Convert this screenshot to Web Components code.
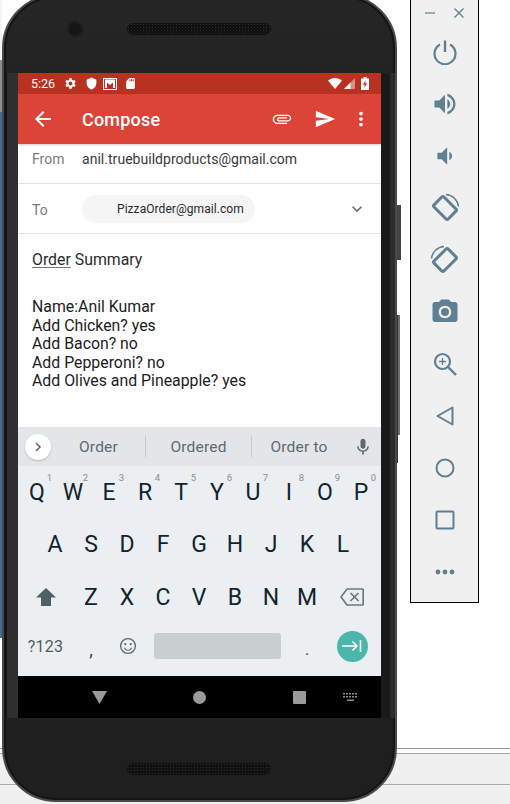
<!DOCTYPE html>
<html>
<head>
<meta charset="utf-8">
<title>Compose</title>
<style>
  html, body { margin: 0; height: 100%; }
  body { overflow: hidden; font-family: Roboto, "Liberation Sans", sans-serif; }
</style>
</head>
<body>
<emulator-stage>
  <phone-frame slot="phone">
    <status-bar></status-bar>
    <app-bar></app-bar>
    <compose-fields></compose-fields>
    <message-body></message-body>
    <suggestion-strip></suggestion-strip>
    <soft-keyboard></soft-keyboard>
    <nav-bar></nav-bar>
  </phone-frame>
  <emulator-panel slot="panel"></emulator-panel>
</emulator-stage>

<script>
function icon(d, size, fill, extra = "") {
  return `<svg width="${size}" height="${size}" viewBox="0 0 24 24" fill="${fill}" ${extra}><path d="${d}"/></svg>`;
}

class EmulatorStage extends HTMLElement {
  constructor() {
    super();
    this.attachShadow({ mode: "open" }).innerHTML = `
    <style>
      :host {
        display: flex;
        width: 510px;
        height: 804px;
        overflow: hidden;
        background:
          linear-gradient(#fff 0 748px, #999 748px 749px, #fff 749px 753px, #a5a5a5 753px 754px, #f0f0f0 754px 784px, #a8a8a8 784px 785px, #f0f0f0 785px);
      }
      .edge { width: 2px; flex: none; height: 638px; background: linear-gradient(#f5f5f5 0 60px, #8f8f8f 60px 112px, #3f6d99 112px); }
      .buttons { width: 4px; flex: none; display: flex; flex-direction: column; align-items: flex-start; padding-top: 205px; margin-right: 9px; }
      .buttons i { display: block; }
      .buttons .vol { width: 4px; height: 55px; margin-bottom: 55px; background: #444; }
      .buttons .pow { width: 3px; height: 120px; background: linear-gradient(90deg, #333 0 1px, #6e6e6e 1px); }
      .buttons .end { width: 1px; height: 28px; background: #333; }
    </style>
    <div class="edge"></div>
    <slot name="phone"></slot>
    <div class="buttons"><i class="vol"></i><i class="pow"></i><i class="end"></i></div>
    <slot name="panel"></slot>`;
  }
}

class PhoneFrame extends HTMLElement {
  constructor() {
    super();
    this.attachShadow({ mode: "open" }).innerHTML = `
    <style>
      :host {
        display: flex;
        flex-direction: column;
        flex: none;
        box-sizing: border-box;
        width: 395px;
        height: 808px;
        margin-top: -6px;
        border-radius: 54px;
        background: linear-gradient(#262626, #1f1f1f 20%);
        border: 2px solid #4a4a4a;
        box-shadow: inset 0 0 0 2px #141414;
      }
      .top, .bottom { display: flex; align-items: center; flex: none; }
      .top { height: 77px; padding-left: 65px; }
      .bottom { height: 82px; padding-left: 123px; }
      .mid {
        display: flex; flex: none; height: 645px;
        background: linear-gradient(90deg, #141414 0 3px, #2f2f2f 3px 14px, #1a1a1a 14px 386px, #2c2c2c 386px);
      }
      .screen { display: flex; flex-direction: column; width: 363px; height: 645px; margin-left: 14px; overflow: hidden; background: #fff; }
      .speaker {
        width: 144px; height: 12px; border-radius: 6px; background-color: #111;
        background-image: radial-gradient(#2c2c2c 0.7px, transparent 0.8px);
        background-size: 3px 3px;
      }
      .top .speaker { margin-bottom: 11px; }
      .bottom .speaker { margin-top: 20px; }
      .camera {
        width: 12px; height: 12px; border-radius: 50%; background: #161618; flex: none;
        box-shadow: 0 0 0 2px #1d1d1e; margin: 0 46px 11px 0;
      }
    </style>
    <div class="top"><div class="camera"></div><div class="speaker"></div></div>
    <div class="mid"><div class="screen"><slot></slot></div></div>
    <div class="bottom"><div class="speaker"></div></div>`;
  }
}

class StatusBar extends HTMLElement {
  constructor() {
    super();
    const gear = "M19.14 12.94c.04-.3.06-.61.06-.94 0-.32-.02-.64-.07-.94l2.03-1.58c.18-.14.23-.41.12-.61l-1.92-3.32c-.12-.22-.37-.29-.59-.22l-2.39.96c-.5-.38-1.03-.7-1.62-.94l-.36-2.54c-.04-.24-.24-.41-.48-.41h-3.84c-.24 0-.43.17-.47.41l-.36 2.54c-.59.24-1.13.57-1.62.94l-2.39-.96c-.22-.08-.47 0-.59.22L2.74 8.87c-.12.21-.08.47.12.61l2.03 1.58c-.05.3-.09.63-.09.94s.02.64.07.94l-2.03 1.58c-.18.14-.23.41-.12.61l1.92 3.32c.12.22.37.29.59.22l2.39-.96c.5.38 1.03.7 1.62.94l.36 2.54c.05.24.24.41.48.41h3.84c.24 0 .44-.17.47-.41l.36-2.54c.59-.24 1.13-.56 1.62-.94l2.39.96c.22.08.47 0 .59-.22l1.92-3.32c.12-.22.07-.47-.12-.61l-2.01-1.58zM12 15.6c-1.98 0-3.6-1.62-3.6-3.6s1.62-3.6 3.6-3.6 3.6 1.62 3.6 3.6-1.62 3.6-3.6 3.6z";
    const shield = "M12 1L3 5v6c0 5.55 3.84 10.74 9 12 5.16-1.26 9-6.45 9-12V5l-9-4z";
    const sd = "M18 2h-8L4.02 8 4 20c0 1.1.9 2 2 2h12c1.1 0 2-.9 2-2V4c0-1.1-.9-2-2-2zm-6 6h-2V4h2v4zm3 0h-2V4h2v4zm3 0h-2V4h2v4z";
    this.attachShadow({ mode: "open" }).innerHTML = `
    <style>
      :host {
        display: flex; align-items: center; flex: none; box-sizing: border-box;
        height: 21px; padding: 0 12px 0 13px; background: #b93221; color: #fff;
        font: 400 12.5px Roboto, sans-serif;
      }
      svg { display: block; flex: none; }
      .time { width: 33px; }
      .left { display: flex; align-items: center; }
      .right { display: flex; align-items: center; margin-left: auto; gap: 2px; }
    </style>
    <div class="time">5:26</div>
    <div class="left">
      ${icon(gear, 13, "#fff")}
      ${icon(shield, 13, "#fff", 'style="margin-left:8px"')}
      <svg width="14" height="12" viewBox="0 0 14 12" style="margin-left:5px"><path fill="#fff" d="M0 0h14v12H0z"/><path fill="#b93221" d="M1 1h12v10H1z"/><path fill="#fff" d="M2 1.5h10v8.500H10V4.500L7 7 4 4.500V10H2z"/></svg>
      ${icon(sd, 13, "#fff", 'style="margin-left:7px"')}
    </div>
    <div class="right">
      <svg width="14" height="11" viewBox="0 0 14 11"><path fill="#fff" d="M7 11L0 2.600C2 1 4.400 0 7 0s5 1 7 2.600z"/></svg>
      <svg width="11" height="11" viewBox="0 0 11 11"><path fill="#fff" fill-opacity=".45" d="M11 0v11H0z"/><path fill="#fff" d="M6.500 4.500V11H0z"/></svg>
      <svg width="8" height="13" viewBox="0 0 8 13" style="margin-left:4px"><path fill="#fff" d="M2.500 0h3v1.500H8V13H0V1.500h2.500z"/><path fill="#b93221" d="M4.600 3L2 7.800h1.700L3.300 11 6 6.300H4.200z"/></svg>
    </div>`;
  }
}

class AppBar extends HTMLElement {
  constructor() {
    super();
    const back = "M20 11H7.830l5.590-5.590L12 4l-8 8 8 8 1.410-1.410L7.830 13H20v-2z";
    const clip = "M16.500 6v11.500c0 2.210-1.790 4-4 4s-4-1.790-4-4V5c0-1.380 1.120-2.500 2.500-2.500s2.500 1.120 2.500 2.500v10.500c0 .55-.45 1-1 1s-1-.45-1-1V6H10v9.500c0 1.380 1.120 2.500 2.500 2.500s2.500-1.120 2.500-2.500V5c0-2.210-1.790-4-4-4S7 2.790 7 5v12.500c0 3.040 2.460 5.500 5.500 5.500s5.500-2.460 5.500-5.500V6h-1.500z";
    const send = "M2.010 21L23 12 2.010 3 2 10l15 2-15 2z";
    const more = "M12 8c1.100 0 2-.9 2-2s-.9-2-2-2-2 .9-2 2 .9 2 2 2zm0 2c-1.100 0-2 .9-2 2s.9 2 2 2 2-.9 2-2-.9-2-2-2zm0 6c-1.100 0-2 .9-2 2s.9 2 2 2 2-.9 2-2-.9-2-2-2z";
    this.attachShadow({ mode: "open" }).innerHTML = `
    <style>
      :host {
        display: flex; align-items: center; flex: none; box-sizing: border-box;
        height: 50px; padding-left: 13px; background: #db4437; color: #fff;
        font: 500 18px Roboto, sans-serif; letter-spacing: .2px;
        box-shadow: 0 1px 2px #0003;
        position: relative;
      }
      svg { display: block; flex: none; }
      .title { margin-left: 27px; flex: 1; }
      .clip { margin-right: 22px; }
      .send { margin-right: 14px; }
      .more { margin-right: 9px; }
    </style>
    ${icon(back, 24, "#fff")}
    <div class="title">Compose</div>
    ${icon(clip, 20, "#fff", 'class="clip" style="transform:rotate(90deg)"')}
    ${icon(send, 22, "#fff", 'class="send"')}
    ${icon(more, 22, "#fff", 'class="more"')}`;
  }
}

class ComposeFields extends HTMLElement {
  constructor() {
    super();
    const chevron = "M7.410 8.590L12 13.170l4.590-4.580L18 10l-6 6-6-6z";
    this.attachShadow({ mode: "open" }).innerHTML = `
    <style>
      :host { display: block; flex: none; font: 400 14px Roboto, sans-serif; }
      .row { display: flex; align-items: center; padding-left: 14px; border-bottom: 1px solid #e4e4e4; box-sizing: border-box; }
      .from { height: 40px; padding-bottom: 9px; color: #3c3c3c; }
      .to { height: 50px; }
      .label { width: 50px; flex: none; color: #7b7b7b; }
      .from .value { color: #3a3a3a; letter-spacing: .03px; }
      .to .label { width: 50px; font-size: 14px; padding-top: 2px; }
      .chip {
        display: flex; align-items: center; box-sizing: border-box;
        width: 173px; height: 28px; padding-left: 35px; border-radius: 14px;
        background: #f5f5f5; color: #2a2a2a; font-size: 12px; letter-spacing: .06px;
      }
      svg { margin-left: auto; margin-right: 14px; display: block; }
    </style>
    <div class="row from"><div class="label">From</div><div class="value">anil.truebuildproducts@gmail.com</div></div>
    <div class="row to"><div class="label">To</div><div class="chip">PizzaOrder@gmail.com</div>${icon(chevron, 20, "#6f6f6f")}</div>`;
  }
}

class MessageBody extends HTMLElement {
  constructor() {
    super();
    this.attachShadow({ mode: "open" }).innerHTML = `
    <style>
      :host {
        display: block; flex: none; box-sizing: border-box; height: 193px; padding: 17px 14px 0;
        color: #1c1c1c; font: 400 15.85px/18.6px Roboto, sans-serif; background: #fff;
      }
      .subject { height: 47px; color: #2b2b2b; }
      u { text-decoration-color: #777; text-underline-offset: 2px; }
    </style>
    <div class="subject"><u>Order</u> Summary</div>
    <div>Name:Anil Kumar</div>
    <div>Add Chicken? yes</div>
    <div>Add Bacon? no</div>
    <div>Add Pepperoni? no</div>
    <div>Add Olives and Pineapple? yes</div>`;
  }
}

class SuggestionStrip extends HTMLElement {
  constructor() {
    super();
    const mic = "M12 14c1.660 0 2.990-1.340 2.990-3L15 5c0-1.660-1.340-3-3-3S9 3.340 9 5v6c0 1.660 1.340 3 3 3zm5.300-3c0 3-2.540 5.100-5.300 5.100S6.700 14 6.700 11H5c0 3.410 2.720 6.230 6 6.720V21h2v-3.280c3.280-.48 6-3.300 6-6.720h-1.700z";
    this.attachShadow({ mode: "open" }).innerHTML = `
    <style>
      :host {
        display: flex; align-items: center; flex: none; box-sizing: border-box;
        height: 39px; padding-left: 7px; background: #e3e6e8; color: #5d6a71;
        font: 400 15.5px Roboto, sans-serif; letter-spacing: .2px;
      }
      .open {
        display: flex; align-items: center; justify-content: center; flex: none;
        width: 26px; height: 26px; border-radius: 50%; background: #fff; box-shadow: 0 1px 2px #0003;
      }
      .item { text-align: center; flex: none; height: 21px; line-height: 23px; }
      .item + .item { border-left: 1px solid #c3c9cc; box-sizing: border-box; }
      .a { width: 93px; margin-left: 1px; }
      .b { width: 106px; }
      .c { width: 95px; }
      svg { display: block; flex: none; margin-left: 7px; }
    </style>
    <div class="open"><svg width="8" height="10" viewBox="0 0 8 10" style="margin:0"><path d="M2 1l4 4-4 4" fill="none" stroke="#5a6469" stroke-width="1.500"/></svg></div>
    <div class="item a">Order</div>
    <div class="item b">Ordered</div>
    <div class="item c">Order to</div>
    ${icon(mic, 20, "#5d6a71")}`;
  }
}

class KeyCap extends HTMLElement {
  constructor() {
    super();
    this.attachShadow({ mode: "open" }).innerHTML = `
    <style>
      :host {
        display: flex; align-items: center; justify-content: center; position: relative;
        font: 400 23px Roboto, sans-serif; color: #10242f;
        height: 100%;
      }
      .hint { position: absolute; top: 6px; right: 3px; font-size: 9.500px; color: #868e93; }
    </style>
    <slot></slot>
    ${this.hasAttribute("hint") ? `<span class="hint">${this.getAttribute("hint")}</span>` : ""}`;
  }
}

class SoftKeyboard extends HTMLElement {
  constructor() {
    super();
    const caps = (s, hints) => [...s].map((c, i) => `<key-cap ${hints ? `hint="${(i + 1) % 10}"` : ""}>${c}</key-cap>`).join("");
    this.attachShadow({ mode: "open" }).innerHTML = `
    <style>
      :host { display: block; flex: none; box-sizing: border-box; height: 210px; background: #eceff1; }
      .row { display: grid; height: 52.500px; align-items: stretch; }
      .r1 { grid-template-columns: repeat(10, 36px); padding-left: 1px; }
      .r2 { grid-template-columns: repeat(9, 36px); padding-left: 19px; }
      .r3 { grid-template-columns: 55px repeat(7, 36px) 54px; }
      .r4 { display: flex; align-items: center; padding-bottom: 7px; box-sizing: border-box; height: 52.500px; }
      .sym { width: 55px; text-align: center; font: 400 16px Roboto, sans-serif; color: #4f5b62; letter-spacing: .3px; }
      .comma { width: 36px; text-align: center; font: 400 18px Roboto, sans-serif; color: #333f46; padding-top: 6px; }
      .space { width: 127px; height: 26px; margin-left: 8px; border-radius: 3px; background: #c9ced1; }
      .dot { width: 46px; margin-left: 3px; text-align: center; font: 400 16px Roboto, sans-serif; color: #333f46; padding-top: 6px; }
      .go {
        display: flex; align-items: center; justify-content: center;
        width: 31px; height: 31px; margin-left: 6.500px; border-radius: 50%; background: #4db6ac;
      }
      .ic { display: flex; align-items: center; justify-content: center; height: 100%; }
      svg { display: block; }
    </style>
    <div class="row r1">${caps("QWERTYUIOP", true)}</div>
    <div class="row r2">${caps("ASDFGHJKL")}</div>
    <div class="row r3">
      <div class="ic"><svg width="20" height="18" viewBox="0 0 20 18"><path fill="#4f5f68" d="M10 0l10 9.500h-5V18H5V9.500H0z"/></svg></div>
      ${caps("ZXCVBNM")}
      <div class="ic"><svg width="24" height="18" viewBox="0 0 24 18"><path fill="none" stroke="#6a7880" stroke-width="1.700" d="M7 1h15.500a.8.8 0 0 1 .7.8v14.400a.8.8 0 0 1-.7.8H7L1 9z"/><path fill="none" stroke="#6a7880" stroke-width="1.700" d="M10.500 5l8 8M18.500 5l-8 8"/></svg></div>
    </div>
    <div class="r4">
      <div class="sym">?123</div>
      <div class="comma">,</div>
      <div class="ic" style="width:37px;height:auto"><svg width="18" height="18" viewBox="0 0 20 20"><circle cx="10" cy="10" r="8.200" fill="none" stroke="#5d6a71" stroke-width="1.500"/><circle cx="7" cy="8" r="1.200" fill="#5d6a71"/><circle cx="13" cy="8" r="1.200" fill="#5d6a71"/><path d="M6 12c1 2 2.400 3 4 3s3-1 4-3" fill="none" stroke="#5d6a71" stroke-width="1.300"/></svg></div>
      <div class="space"></div>
      <div class="dot">.</div>
      <div class="go"><svg width="20" height="12" viewBox="0 0 20 12"><path fill="none" stroke="#fff" stroke-width="1.600" d="M0 6h15M10.500 1.500L15 6l-4.500 4.500M18.500 0v12"/></svg></div>
    </div>`;
  }
}

class NavBar extends HTMLElement {
  constructor() {
    super();
    this.attachShadow({ mode: "open" }).innerHTML = `
    <style>
      :host { display: flex; align-items: center; flex: 1; box-sizing: border-box; padding-left: 74px; background: #000; }
      svg { display: block; flex: none; }
      .home { width: 13px; height: 13px; border-radius: 50%; background: #9a9a9a; margin-left: 86px; flex: none; }
      .recent { width: 13px; height: 13px; background: #9a9a9a; border-radius: 1px; margin-left: 87px; flex: none; }
    </style>
    <svg width="15" height="13" viewBox="0 0 15 13"><path fill="#9a9a9a" d="M0 0h15L7.500 13z"/></svg>
    <div class="home"></div>
    <div class="recent"></div>
    <svg width="15" height="9" viewBox="0 0 15 9" style="margin-left:37px"><path fill="#8c8c8c" d="M0 0h2v1.500H0zM3 0h2v1.500H3zM6 0h2v1.500H6zM9 0h2v1.500H9zM12 0h2v1.500h-2zM0 3h2v1.500H0zM3 3h2v1.500H3zM6 3h2v1.500H6zM9 3h2v1.500H9zM12 3h2v1.500h-2zM4 6.500h7V8H4z"/></svg>`;
  }
}

class EmulatorPanel extends HTMLElement {
  constructor() {
    super();
    const c = "#5f7f92";
    const volUp = "M3 9v6h4l5 5V4L7 9H3zm13.500 3c0-1.770-1.020-3.290-2.500-4.030v8.050c1.480-.73 2.500-2.250 2.500-4.020zM14 3.230v2.060c2.890.86 5 3.540 5 6.710s-2.110 5.850-5 6.710v2.060c4.010-.91 7-4.490 7-8.770s-2.990-7.860-7-8.770z";
    const volDown = "M18.500 12c0-1.770-1.020-3.290-2.500-4.030v8.050c1.480-.73 2.500-2.250 2.500-4.020zM5 9v6h4l5 5V4L9 9H5z";
    const camera = "M9 2L7.170 4H4c-1.100 0-2 .9-2 2v12c0 1.100.9 2 2 2h16c1.100 0 2-.9 2-2V6c0-1.100-.9-2-2-2h-3.170L15 2H9zm3 15c-2.760 0-5-2.240-5-5s2.240-5 5-5 5 2.240 5 5-2.240 5-5 5zm0-1.800a3.200 3.200 0 1 0 0-6.400 3.200 3.200 0 0 0 0 6.400z";
    const stroke = `fill="none" stroke="${c}"`;
    const rotate = (flip) => `<svg width="30" height="30" viewBox="0 0 30 30" style="${flip ? "transform:scaleX(-1)" : ""}">
      <rect x="5" y="8" width="20" height="14" rx="1.500" ${stroke} stroke-width="3" transform="rotate(45 15 15)"/>
      <path d="M16 1.500c6.500 .4 11.800 5.500 12.500 12" ${stroke} stroke-width="1.500"/></svg>`;
    this.attachShadow({ mode: "open" }).innerHTML = `
    <style>
      :host {
        display: block; flex: none; box-sizing: border-box; width: 69px; height: 603px;
        border: solid #000; border-width: 0 1.500px 1.500px 1.500px; background: #f0f0f0;
      }
      .win { display: flex; align-items: center; height: 26px; padding-left: 14px; gap: 19px; }
      .tool { display: flex; align-items: center; justify-content: center; height: 52px; }
      svg { display: block; flex: none; }
    </style>
    <div class="win">
      <svg width="10" height="2" viewBox="0 0 10 2"><path d="M0 1h10" stroke="${c}" stroke-width="1.200"/></svg>
      <svg width="10" height="10" viewBox="0 0 10 10"><path d="M.5.500l9 9M9.500.500l-9 9" stroke="${c}" stroke-width="1.300"/></svg>
    </div>
    <div class="tool"><svg width="26" height="26" viewBox="0 0 26 26"><path d="M8 5.500a10.500 10.500 0 1 0 10 0" ${stroke} stroke-width="2.200"/><path d="M13 1.500v11.500" ${stroke} stroke-width="2.400"/></svg></div>
    <div class="tool">${icon(volUp, 28, c)}</div>
    <div class="tool">${icon(volDown, 26, c)}</div>
    <div class="tool">${rotate(false)}</div>
    <div class="tool">${rotate(true)}</div>
    <div class="tool">${icon(camera, 30, c)}</div>
    <div class="tool"><svg width="24" height="24" viewBox="0 0 24 24"><circle cx="9.500" cy="9.500" r="7.500" ${stroke} stroke-width="2.200"/><path d="M15 15l8 8" ${stroke} stroke-width="2.400"/><path d="M9.500 6v7M6 9.500h7" ${stroke} stroke-width="1.300"/></svg></div>
    <div class="tool"><svg width="18" height="20" viewBox="0 0 18 20"><path d="M16.500 1.500v17L1.500 10z" ${stroke} stroke-width="2" stroke-linejoin="round"/></svg></div>
    <div class="tool"><svg width="20" height="20" viewBox="0 0 20 20"><circle cx="10" cy="10" r="8.500" ${stroke} stroke-width="2"/></svg></div>
    <div class="tool"><svg width="20" height="20" viewBox="0 0 20 20"><rect x="1.500" y="1.500" width="17" height="17" rx="1" ${stroke} stroke-width="2"/></svg></div>
    <div class="tool"><svg width="20" height="6" viewBox="0 0 20 6"><circle cx="3" cy="3" r="2.400" fill="${c}"/><circle cx="10" cy="3" r="2.400" fill="${c}"/><circle cx="17" cy="3" r="2.400" fill="${c}"/></svg></div>`;
  }
}

customElements.define("emulator-stage", EmulatorStage);
customElements.define("phone-frame", PhoneFrame);
customElements.define("status-bar", StatusBar);
customElements.define("app-bar", AppBar);
customElements.define("compose-fields", ComposeFields);
customElements.define("message-body", MessageBody);
customElements.define("suggestion-strip", SuggestionStrip);
customElements.define("key-cap", KeyCap);
customElements.define("soft-keyboard", SoftKeyboard);
customElements.define("nav-bar", NavBar);
customElements.define("emulator-panel", EmulatorPanel);
</script>
</body>
</html>
